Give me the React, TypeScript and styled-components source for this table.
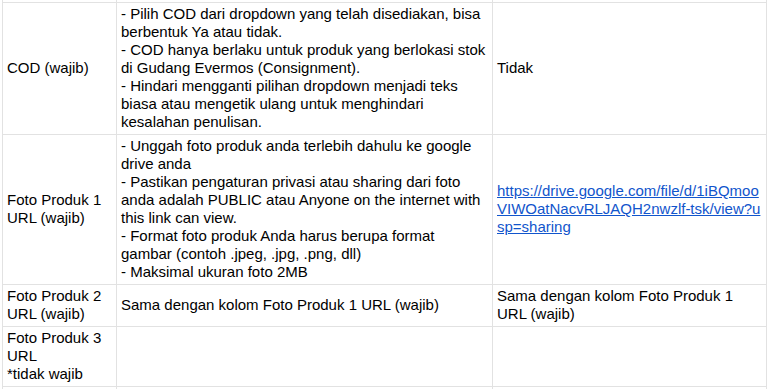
import React from "react";
import styled, { createGlobalStyle } from "styled-components";

const GlobalStyle = createGlobalStyle`
  html, body {
    margin: 0;
    padding: 0;
    background: #ffffff;
  }
  body {
    font-family: "Liberation Sans", Arial, sans-serif;
    color: #000000;
  }
`;

type Row = {
  field: string[];
  rules: string[];
  example?: { lines: string[]; link?: boolean };
};

// lines are kept as they wrap in the sheet
const rows: Row[] = [
  {
    field: ["COD (wajib)"],
    rules: [
      "- Pilih COD dari dropdown yang telah disediakan, bisa",
      "berbentuk Ya atau tidak.",
      "- COD hanya berlaku untuk produk yang berlokasi stok",
      "di Gudang Evermos (Consignment).",
      "- Hindari mengganti pilihan dropdown menjadi teks",
      "biasa atau mengetik ulang untuk menghindari",
      "kesalahan penulisan.",
    ],
    example: { lines: ["Tidak"] },
  },
  {
    field: ["Foto Produk 1", "URL (wajib)"],
    rules: [
      "- Unggah foto produk anda terlebih dahulu ke google",
      "drive anda",
      "- Pastikan pengaturan privasi atau sharing dari foto",
      "anda adalah PUBLIC atau Anyone on the internet with",
      "this link can view.",
      "- Format foto produk Anda harus berupa format",
      "gambar (contoh .jpeg, .jpg, .png, dll)",
      "- Maksimal ukuran foto 2MB",
    ],
    example: {
      lines: [
        "https://drive.google.com/file/d/1iBQmoo",
        "VIWOatNacvRLJAQH2nwzlf-tsk/view?u",
        "sp=sharing",
      ],
      link: true,
    },
  },
  {
    field: ["Foto Produk 2", "URL (wajib)"],
    rules: ["Sama dengan kolom Foto Produk 1 URL (wajib)"],
    example: { lines: ["Sama dengan kolom Foto Produk 1", "URL (wajib)"] },
  },
  {
    field: ["Foto Produk 3", "URL", "*tidak wajib"],
    rules: [],
  },
];

const Sheet = styled.div`
  display: grid;
  grid-template-columns: 114px 376px 274px;
  margin-left: 2px;
  border-left: 1px solid #e2e2e2;
  width: max-content;
`;

const Cell = styled.div<{ $edge?: boolean }>`
  box-sizing: border-box;
  display: flex;
  flex-direction: column;
  justify-content: center;
  height: ${(p) => (p.$edge ? "3px" : "auto")};
  padding: ${(p) => (p.$edge ? "0" : "2px 4px 3px")};
  border-right: 1px solid #e2e2e2;
  border-bottom: 1px solid #e2e2e2;
  font-size: 15px;
  line-height: 18px;
  overflow: hidden;
`;

const Line = styled.span`
  display: block;
  white-space: nowrap;
`;

const LinkLine = styled.a`
  display: block;
  white-space: nowrap;
  color: #1155cc;
  text-decoration: underline;
`;

const Filler = styled.div`
  box-sizing: border-box;
  height: 20px;
  border-right: 1px solid #e2e2e2;
`;

export default function App() {
  return (
    <>
      <GlobalStyle />
      <Sheet>
        <Cell $edge />
        <Cell $edge />
        <Cell $edge />
        {rows.map((row, i) => (
          <React.Fragment key={i}>
            <Cell>
              {row.field.map((t) => (
                <Line key={t}>{t}</Line>
              ))}
            </Cell>
            <Cell>
              {row.rules.map((t) => (
                <Line key={t}>{t}</Line>
              ))}
            </Cell>
            <Cell>
              {row.example?.lines.map((t) =>
                row.example?.link ? (
                  <LinkLine key={t} href="#">
                    {t}
                  </LinkLine>
                ) : (
                  <Line key={t}>{t}</Line>
                )
              )}
            </Cell>
          </React.Fragment>
        ))}
        <Filler />
        <Filler />
        <Filler />
      </Sheet>
    </>
  );
}
